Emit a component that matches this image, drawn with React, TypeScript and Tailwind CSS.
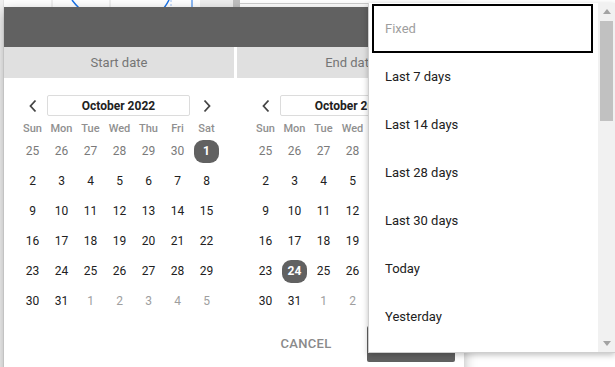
import React from 'react';

type Day = { n: number; tone: 'prev' | 'cur' | 'next' };

const WEEKDAYS = ['Sun', 'Mon', 'Tue', 'Wed', 'Thu', 'Fri', 'Sat'];

const OCTOBER: Day[] = [
  ...[25, 26, 27, 28, 29, 30].map((n) => ({ n, tone: 'prev' as const })),
  ...Array.from({ length: 31 }, (_, i) => ({ n: i + 1, tone: 'cur' as const })),
  ...[1, 2, 3, 4, 5].map((n) => ({ n, tone: 'next' as const })),
];

const PRESETS = ['Last 7 days', 'Last 14 days', 'Last 28 days', 'Last 30 days', 'Today', 'Yesterday'];

const Chevron = ({ dir }: { dir: 'left' | 'right' }) => (
  <div className="flex justify-center">
    <svg width="10" height="14" viewBox="0 0 10 14" fill="none">
      <path
        d={dir === 'left' ? 'M7.5 1.5 L2.5 7 L7.5 12.5' : 'M2.5 1.5 L7.5 7 L2.5 12.5'}
        stroke="#444"
        strokeWidth="1.8"
      />
    </svg>
  </div>
);

const Calendar = ({ selected }: { selected: number }) => (
  <div className="w-[233px] shrink-0 pl-[14px] pt-[17px]">
    <div className="grid grid-cols-[29px_145px_29px] items-center h-[21px]">
      <Chevron dir="left" />
      <div className="h-[21px] mr-[2px] border border-[#dcdcdc] rounded-[2px] flex items-center justify-center text-[12px] font-bold text-[#212121]">
        October 2022
      </div>
      <Chevron dir="right" />
    </div>
    <div className="grid grid-cols-[repeat(7,29px)] mt-[3px]">
      {WEEKDAYS.map((d) => (
        <div key={d} className="h-[17px] pt-[4px] flex items-center justify-center text-[11px] font-medium text-[#909090]">
          {d}
        </div>
      ))}
      {OCTOBER.map((d, i) => {
        const isSel = d.tone === 'cur' && d.n === selected;
        return (
          <div key={i} className="h-[30px] flex items-center justify-center">
            {isSel ? (
              <span className="w-[25px] h-[23px] rounded-[9px] bg-[#616161] text-white font-bold text-[12px] flex items-center justify-center">
                {d.n}
              </span>
            ) : (
              <span
                className={
                  d.tone === 'cur'
                    ? 'text-[12px] text-[#212121]'
                    : d.tone === 'prev'
                    ? 'text-[12px] text-[#7a7a7a]'
                    : 'text-[12px] text-[#9e9e9e]'
                }
              >
                {d.n}
              </span>
            )}
          </div>
        );
      })}
    </div>
  </div>
);

const Triangle = ({ up }: { up?: boolean }) => (
  <div className="h-[17px] flex items-center justify-center">
    <svg width="8" height="5" viewBox="0 0 8 5">
      <path d={up ? 'M0 5 L4 0 L8 5 Z' : 'M0 0 L4 5 L8 0 Z'} fill="#a3a3a3" />
    </svg>
  </div>
);

export default function App() {
  return (
    <div className="relative w-[615px] h-[367px] overflow-hidden bg-white font-['Roboto','Liberation_Sans',sans-serif]">
      {/* page behind the dialog */}
      <div className="flex h-full">
        <div className="w-[4px] bg-[#f1f1f1] border-r border-[#e4e4e4]" />
        <div className="w-[196px] relative">
          <svg width="196" height="367" className="block">
            <line x1="48" y1="0" x2="48" y2="367" stroke="#e0e0e0" />
            <line x1="106" y1="0" x2="106" y2="367" stroke="#e0e0e0" />
            <path d="M68 0 Q71 4 75 8" stroke="#1a73e8" strokeWidth="1.5" fill="none" />
            <path d="M165 0 Q163 4 160 8" stroke="#1a73e8" strokeWidth="1.5" fill="none" />
            <line x1="167" y1="0" x2="167" y2="8" stroke="#9cc0f5" strokeDasharray="2 2" />
            <line x1="188" y1="0" x2="188" y2="8" stroke="#1a73e8" />
          </svg>
        </div>
        <div className="w-[33px] bg-[#eeeeee]" />
        <div className="w-[7px] bg-[#c1c1c1]" />
        <div className="flex-1 bg-white pt-[3px]">
          <div className="border-t border-[#cfcfcf] flex h-[6px]">
            <div className="ml-[238px] w-[1px] bg-[#d0d0d0]" />
            <div className="ml-[16px] w-[10px] bg-[#8bc34a] opacity-60" />
            <div className="ml-[16px] text-[11px] leading-[6px] text-[#444] overflow-hidden">Ad Content</div>
          </div>
        </div>
      </div>

      {/* date range dialog */}
      <div className="absolute left-[4px] top-[7px] w-[460px] h-[380px] bg-white shadow-[0_4px_12px_rgba(0,0,0,0.3)] flex flex-col">
        <div className="h-[40px] bg-[#616161]" />
        <div className="flex gap-[3px]">
          <div className="w-[230px] h-[31px] bg-[#e0e0e0] flex items-center justify-center text-[13px] text-[#757575]">
            Start date
          </div>
          <div className="flex-1 h-[31px] bg-[#e0e0e0] flex items-center justify-center text-[13px] text-[#757575]">
            End date
          </div>
        </div>
        <div className="flex">
          <Calendar selected={1} />
          <Calendar selected={24} />
        </div>
        <div className="flex justify-end items-center gap-[23px] pr-[9px] mt-[10px]">
          <button className="w-[76px] h-[36px] text-[13px] font-medium text-[#8a8a8a] tracking-[0.3px]">CANCEL</button>
          <button className="w-[88px] h-[36px] rounded-[2px] bg-[#616161] text-[13px] font-medium text-white">APPLY</button>
        </div>
      </div>

      {/* preset dropdown */}
      <div className="absolute left-[368px] top-[3px] w-[247px] h-[350px] bg-white border-l border-b border-[#cfcfcf] shadow-[0_2px_6px_rgba(0,0,0,0.25)] flex">
        <div className="flex-1 flex flex-col">
          <div className="mt-[1px] ml-[3px] mr-[5px] h-[49px] border-2 border-black pl-[11px] flex items-center text-[13px] text-[#9e9e9e]">
            Fixed
          </div>
          {PRESETS.map((p) => (
            <div key={p} className="h-[48px] pl-[16px] flex items-center text-[13px] text-[#212121]">
              {p}
            </div>
          ))}
        </div>
        <div className="w-[17px] bg-[#f1f1f1] flex flex-col">
          <Triangle up />
          <div className="flex-1">
            <div className="mt-[1px] mx-[2px] h-[100px] bg-[#c1c1c1]" />
          </div>
          <Triangle />
        </div>
      </div>
    </div>
  );
}
